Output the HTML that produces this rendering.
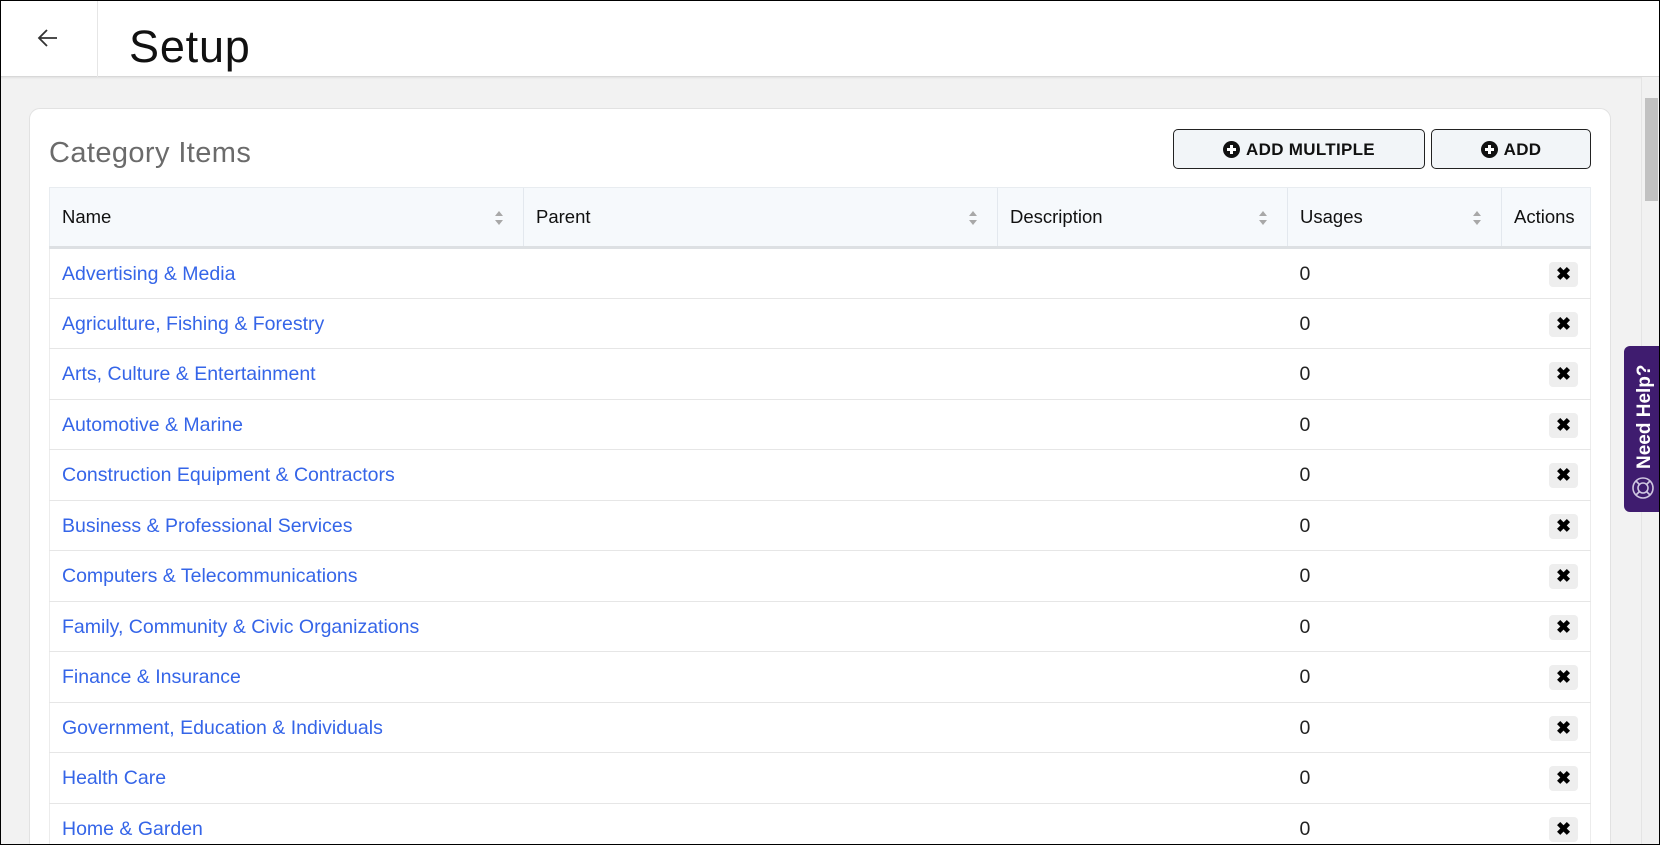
<!DOCTYPE html>
<html><head><meta charset="utf-8"><style>
*{box-sizing:border-box;margin:0;padding:0}
html,body{width:1660px;height:845px;overflow:hidden;background:#f2f2f2;font-family:"Liberation Sans",sans-serif}
.wrap{position:relative;width:1660px;height:845px;overflow:hidden}
.frame{position:absolute;left:0;top:0;width:1660px;height:845px;border:1px solid #000;pointer-events:none;z-index:50}
.hdr{position:absolute;left:0;top:0;width:1660px;height:77px;background:#fff;border-bottom:1px solid #d8d8d8;box-shadow:0 1px 2px rgba(0,0,0,.08)}
.back{position:absolute;left:0;top:0;width:98px;height:77px;border-right:1px solid #e6e6e6}
.title{position:absolute;left:129px;top:21px;font-size:45px;color:#111;letter-spacing:.8px}
.sb{position:absolute;left:1641px;top:77px;width:19px;height:768px;background:#f1f1f1;border-left:1px solid #e4e4e4}
.thumb{position:absolute;left:3px;top:21px;width:13px;height:103px;background:#c1c1c1}
.card{position:absolute;left:29px;top:108px;width:1582px;height:745px;background:#fff;border:1px solid #e2e2e2;border-radius:11px}
.ct{position:absolute;left:49px;top:137px;font-size:29px;color:#6b6b6b;letter-spacing:.4px}
.btn{position:absolute;top:129px;height:40px;border:1px solid #222;border-radius:5px;background:#f2f5f8;font-weight:bold;font-size:17px;color:#111;display:flex;align-items:center;justify-content:center;gap:6px;letter-spacing:.3px;padding-top:1px}
.pl{width:17px;height:17px;border-radius:50%;background:#111;position:relative}
.pl:before{content:"";position:absolute;left:4px;top:7px;width:9px;height:3px;background:#fff}
.pl:after{content:"";position:absolute;left:7px;top:4px;width:3px;height:9px;background:#fff}
table{position:absolute;left:49px;top:187px;width:1542px;border-collapse:collapse;font-size:19.5px}
th{height:60px;background:#f6f9fc;text-align:left;font-weight:normal;color:#111;padding-left:12px;border-left:1px solid #e3e8ee;border-top:1px solid #e8ecf0;border-bottom:3px solid #dde0e3;position:relative;font-size:18.5px}
th:first-child{border-left:1px solid #e8ecf0}
th:last-child{border-right:1px solid #e8ecf0}
.s{position:absolute;right:20px;top:23px;width:8px;height:14px}
.s:before{content:"";position:absolute;top:0;left:0;border:4px solid transparent;border-bottom:5px solid #a8a8a8;border-top:0}
.s:after{content:"";position:absolute;bottom:0;left:0;border:4px solid transparent;border-top:5px solid #a8a8a8;border-bottom:0}
td{height:50.5px;border-bottom:1px solid #e6e6e6;padding-left:12px;padding-top:2px;color:#222}
td:first-child{border-left:1px solid #ececec}
td:last-child{border-right:1px solid #ececec;text-align:right;padding-right:12px}
a{color:#3565e8;text-decoration:none}
.x{display:inline-block;width:29px;height:25px;background:#eeeeee;border-radius:4px;font-weight:bold;font-size:18px;line-height:25px;text-align:center;color:#000}
.help{position:absolute;left:1624px;top:346px;width:40px;height:166px;background:#3f1c6f;border-radius:6px 0 0 6px;z-index:10}
.ht{position:absolute;left:20px;top:8px;transform-origin:0 0;transform:rotate(-90deg) translate(-115px,-10px);color:#fff;font-weight:bold;font-size:19px;white-space:nowrap}
</style></head><body><div class="wrap">
<div class="hdr"><div class="back"><svg style="position:absolute;left:37px;top:28px" width="22" height="20" viewBox="0 0 22 20"><path d="M20 10H2M10 2L2 10l8 8" fill="none" stroke="#333" stroke-width="1.8"/></svg></div><div class="title">Setup</div></div>
<div class="sb"><div class="thumb"></div></div>
<div class="card"></div>
<div class="ct">Category Items</div>
<div class="btn" style="left:1173px;width:252px"><span class="pl"></span>ADD MULTIPLE</div>
<div class="btn" style="left:1431px;width:160px"><span class="pl"></span>ADD</div>
<table>
<tr><th style="width:474px">Name<span class="s"></span></th><th style="width:474px">Parent<span class="s"></span></th><th style="width:290px">Description<span class="s"></span></th><th style="width:214px">Usages<span class="s"></span></th><th>Actions</th></tr>
<tr><td><a>Advertising &amp; Media</a></td><td></td><td></td><td>0</td><td><span class="x">✖</span></td></tr>
<tr><td><a>Agriculture, Fishing &amp; Forestry</a></td><td></td><td></td><td>0</td><td><span class="x">✖</span></td></tr>
<tr><td><a>Arts, Culture &amp; Entertainment</a></td><td></td><td></td><td>0</td><td><span class="x">✖</span></td></tr>
<tr><td><a>Automotive &amp; Marine</a></td><td></td><td></td><td>0</td><td><span class="x">✖</span></td></tr>
<tr><td><a>Construction Equipment &amp; Contractors</a></td><td></td><td></td><td>0</td><td><span class="x">✖</span></td></tr>
<tr><td><a>Business &amp; Professional Services</a></td><td></td><td></td><td>0</td><td><span class="x">✖</span></td></tr>
<tr><td><a>Computers &amp; Telecommunications</a></td><td></td><td></td><td>0</td><td><span class="x">✖</span></td></tr>
<tr><td><a>Family, Community &amp; Civic Organizations</a></td><td></td><td></td><td>0</td><td><span class="x">✖</span></td></tr>
<tr><td><a>Finance &amp; Insurance</a></td><td></td><td></td><td>0</td><td><span class="x">✖</span></td></tr>
<tr><td><a>Government, Education &amp; Individuals</a></td><td></td><td></td><td>0</td><td><span class="x">✖</span></td></tr>
<tr><td><a>Health Care</a></td><td></td><td></td><td>0</td><td><span class="x">✖</span></td></tr>
<tr><td><a>Home &amp; Garden</a></td><td></td><td></td><td>0</td><td><span class="x">✖</span></td></tr>
</table>
<div class="help"><div class="ht">Need Help?</div><svg style="position:absolute;left:7px;top:130px" width="24" height="24" viewBox="0 0 24 24" fill="none" stroke="#cfc6e0" stroke-width="1.6"><circle cx="12" cy="12" r="10"/><circle cx="12" cy="12" r="5"/><path d="M5 5l3.5 3.5M19 5l-3.5 3.5M5 19l3.5-3.5M19 19l-3.5-3.5"/></svg></div>
<div class="frame"></div>
</div></body></html>
